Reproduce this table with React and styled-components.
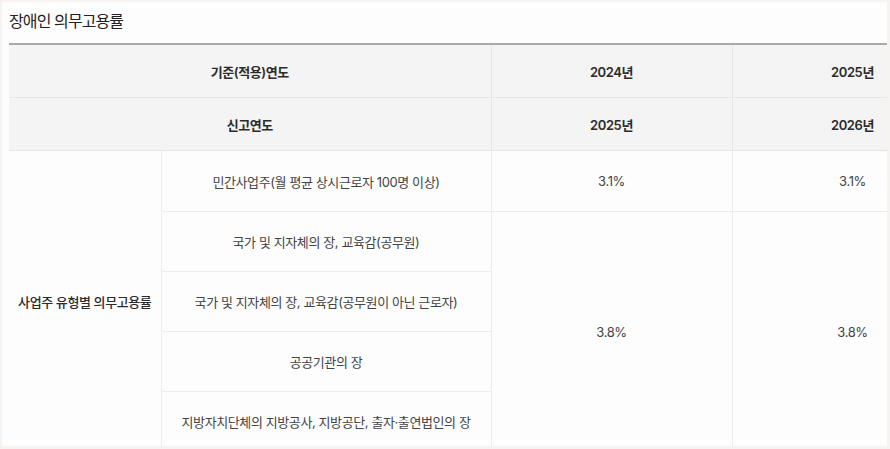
import React from 'react';
import styled, { createGlobalStyle } from 'styled-components';

const GlobalStyle = createGlobalStyle`
  html, body {
    margin: 0;
    padding: 0;
    background: #f7f3f0;
  }
  body {
    font-family: Inter, "Noto Sans CJK KR", "Noto Sans", sans-serif;
    color: #333;
  }
`;

const Page = styled.div`
  padding: 2px 3px 0 2px;
  height: 449px;
  box-sizing: border-box;
`;

const Panel = styled.section`
  background: #fdfdfd;
  height: 444px;
  overflow: hidden;
  padding: 0 0 0 7px;
  box-sizing: border-box;
`;

const Title = styled.h3`
  margin: 0;
  padding: 6px 0 0 0;
  height: 41px;
  box-sizing: border-box;
  font-size: 16px;
  font-weight: 400;
  color: #222;
  letter-spacing: -0.9px;
`;

const TableWrap = styled.div`
  overflow: hidden;
`;

const Table = styled.table`
  width: 964px;
  border-collapse: collapse;
  table-layout: fixed;
  border-top: 2px solid #a9a9a9;
  font-size: 13px;
  letter-spacing: -0.4px;
`;

const HeadCell = styled.th`
  height: 52px;
  background: #f4f4f4;
  border: 1px solid #e6e6e6;
  border-top: ${p => (p.$first ? 'none' : '1px solid #e6e6e6')};
  font-weight: 600;
  color: #2b2b2b;
  text-align: center;
  padding: 0;
`;

const Cell = styled.td`
  height: ${p => (p.$h ? `${p.$h}px` : '59px')};
  border: 1px solid #ececec;
  border-left: ${p => (p.$edge ? 'none' : '1px solid #ececec')};
  text-align: center;
  color: ${p => (p.$strong ? '#2b2b2b' : '#444')};
  font-weight: ${p => (p.$strong ? 500 : 400)};
  padding: 0;
  background: #fdfdfd;
`;

const types = [
  '국가 및 지자체의 장, 교육감(공무원)',
  '국가 및 지자체의 장, 교육감(공무원이 아닌 근로자)',
  '공공기관의 장',
  '지방자치단체의 지방공사, 지방공단, 출자·출연법인의 장',
];

export default function App() {
  return (
    <>
      <GlobalStyle />
      <Page>
        <Panel>
          <Title>장애인 의무고용률</Title>
          <TableWrap>
            <Table>
              <colgroup>
                <col style={{ width: 152 }} />
                <col style={{ width: 330 }} />
                <col style={{ width: 241 }} />
                <col style={{ width: 241 }} />
              </colgroup>
              <thead>
                <tr>
                  <HeadCell $first colSpan={2} style={{ borderLeft: 'none' }}>기준(적용)연도</HeadCell>
                  <HeadCell $first>2024년</HeadCell>
                  <HeadCell $first>2025년</HeadCell>
                </tr>
                <tr>
                  <HeadCell colSpan={2} style={{ borderLeft: 'none' }}>신고연도</HeadCell>
                  <HeadCell>2025년</HeadCell>
                  <HeadCell>2026년</HeadCell>
                </tr>
              </thead>
              <tbody>
                <tr>
                  <Cell $edge $strong rowSpan={5}>사업주 유형별 의무고용률</Cell>
                  <Cell $h={60}>민간사업주(월 평균 상시근로자 100명 이상)</Cell>
                  <Cell $h={60}>3.1%</Cell>
                  <Cell $h={60}>3.1%</Cell>
                </tr>
                {types.map((t, i) => (
                  <tr key={t}>
                    <Cell>{t}</Cell>
                    {i === 0 && (
                      <>
                        <Cell rowSpan={4}>3.8%</Cell>
                        <Cell rowSpan={4}>3.8%</Cell>
                      </>
                    )}
                  </tr>
                ))}
              </tbody>
            </Table>
          </TableWrap>
        </Panel>
      </Page>
    </>
  );
}
